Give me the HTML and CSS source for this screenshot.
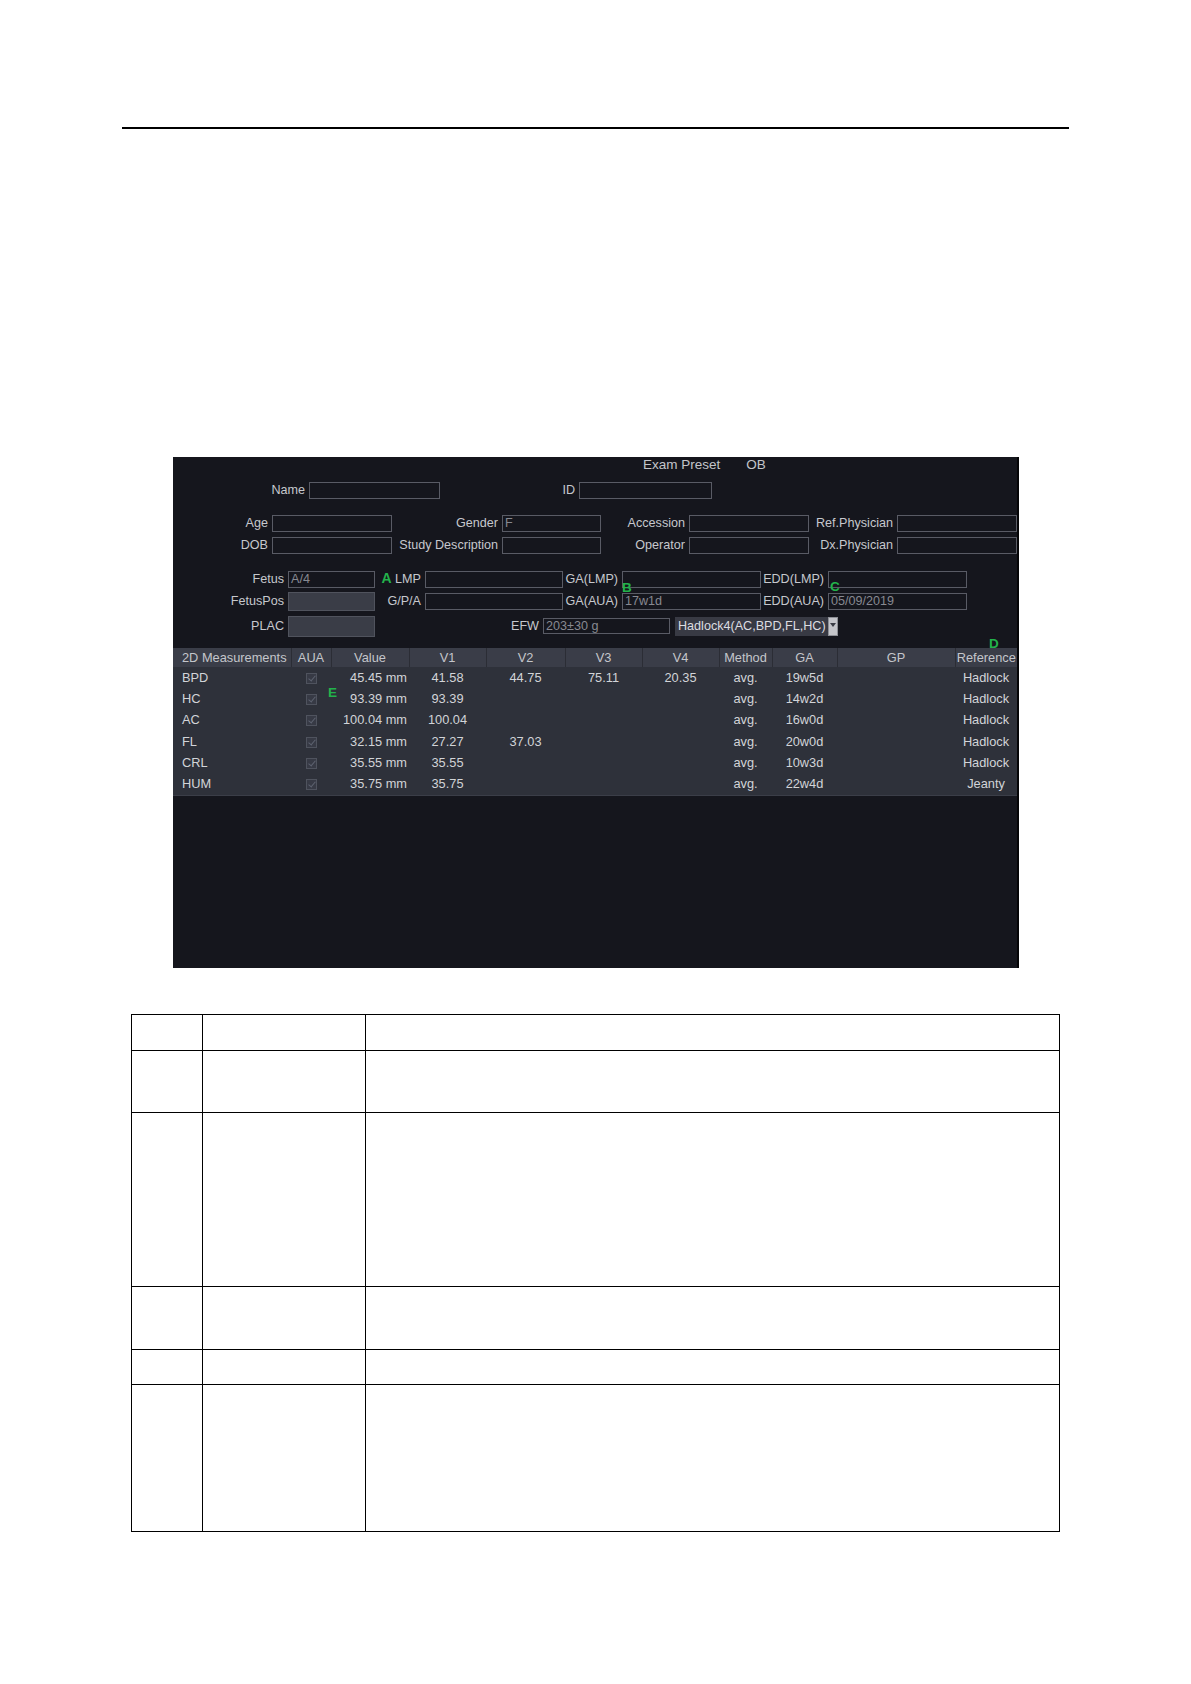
FILE: index.html
```html
<!DOCTYPE html>
<html>
<head>
<meta charset="utf-8">
<link rel="stylesheet" href="styles.css">
</head>
<body>
<div class="page">
  <div class="top-rule"></div>

  <div class="panel">
    <div class="exam-row"><span>Exam Preset</span><span class="exam-ob">OB</span></div>

    <div class="frow r-top">
      <div class="lbl">Name</div><div class="fld"></div>
      <div class="lbl">ID</div><div class="fld"></div>
    </div>

    <div class="frow r-a r-a1">
      <div class="lbl">Age</div><div class="fld"></div>
      <div class="lbl">Gender</div><div class="fld">F</div>
      <div class="lbl">Accession</div><div class="fld"></div>
      <div class="lbl">Ref.Physician</div><div class="fld"></div>
    </div>

    <div class="frow r-a r-a2">
      <div class="lbl">DOB</div><div class="fld"></div>
      <div class="lbl">Study Description</div><div class="fld"></div>
      <div class="lbl">Operator</div><div class="fld"></div>
      <div class="lbl">Dx.Physician</div><div class="fld"></div>
    </div>

    <div class="frow r-b r-b1">
      <div class="lbl">Fetus</div><div class="fld">A/4</div>
      <div class="lbl"><span class="mark-a">A</span> LMP</div><div class="fld"></div>
      <div class="lbl">GA(LMP)</div><div class="fld"></div>
      <div class="lbl">EDD(LMP)</div><div class="fld"></div>
    </div>

    <div class="frow r-b r-b2">
      <div class="lbl">FetusPos</div><div class="fld filled"></div>
      <div class="lbl">G/P/A</div><div class="fld"></div>
      <div class="lbl">GA(AUA)</div><div class="fld">17w1d</div>
      <div class="lbl">EDD(AUA)</div><div class="fld">05/09/2019</div>
    </div>

    <div class="frow r-c">
      <div class="lbl">PLAC</div><div class="fld filled tall"></div>
      <div class="lbl">EFW</div><div class="fld short">203±30 g</div>
      <div></div>
      <div class="dropdown">Hadlock4(AC,BPD,FL,HC)</div>
      <div class="dd-arrow"><svg width="10" height="19" viewBox="0 0 10 19"><rect x="0" y="0" width="10" height="19" fill="#c4c5ca"/><rect x="0.5" y="0.5" width="9" height="18" fill="none" stroke="#8d8f96"/><polygon points="2,6 8,6 5,10" fill="#3a3c45"/></svg></div>
    </div>

    <table class="meas">
      <colgroup>
        <col class="c-name"><col class="c-aua"><col class="c-val"><col class="c-v1"><col class="c-v2"><col class="c-v3"><col class="c-v4"><col class="c-meth"><col class="c-ga"><col class="c-gp"><col class="c-ref">
      </colgroup>
      <thead>
        <tr>
          <th class="left">2D Measurements</th><th>AUA</th><th>Value</th><th>V1</th><th>V2</th><th>V3</th><th>V4</th><th>Method</th><th>GA</th><th>GP</th><th>Reference</th>
        </tr>
      </thead>
      <tbody>
        <tr><td class="left">BPD</td><td><span class="cb"></span></td><td class="right">45.45 mm</td><td>41.58</td><td>44.75</td><td>75.11</td><td>20.35</td><td>avg.</td><td>19w5d</td><td></td><td>Hadlock</td></tr>
        <tr><td class="left">HC</td><td><span class="cb"></span></td><td class="right">93.39 mm</td><td>93.39</td><td></td><td></td><td></td><td>avg.</td><td>14w2d</td><td></td><td>Hadlock</td></tr>
        <tr><td class="left">AC</td><td><span class="cb"></span></td><td class="right">100.04 mm</td><td>100.04</td><td></td><td></td><td></td><td>avg.</td><td>16w0d</td><td></td><td>Hadlock</td></tr>
        <tr><td class="left">FL</td><td><span class="cb"></span></td><td class="right">32.15 mm</td><td>27.27</td><td>37.03</td><td></td><td></td><td>avg.</td><td>20w0d</td><td></td><td>Hadlock</td></tr>
        <tr><td class="left">CRL</td><td><span class="cb"></span></td><td class="right">35.55 mm</td><td>35.55</td><td></td><td></td><td></td><td>avg.</td><td>10w3d</td><td></td><td>Hadlock</td></tr>
        <tr><td class="left">HUM</td><td><span class="cb"></span></td><td class="right">35.75 mm</td><td>35.75</td><td></td><td></td><td></td><td>avg.</td><td>22w4d</td><td></td><td>Jeanty</td></tr>
      </tbody>
    </table>

    <span class="mark mark-b">B</span>
    <span class="mark mark-c">C</span>
    <span class="mark mark-d">D</span>
    <span class="mark mark-e">E</span>
  </div>

  <table class="doc">
    <colgroup><col class="d1"><col class="d2"><col class="d3"></colgroup>
    <tr class="h36"><td></td><td></td><td></td></tr>
    <tr class="h62"><td></td><td></td><td></td></tr>
    <tr class="h174"><td></td><td></td><td></td></tr>
    <tr class="h63"><td></td><td></td><td></td></tr>
    <tr class="h35"><td></td><td></td><td></td></tr>
    <tr class="h147"><td></td><td></td><td></td></tr>
  </table>
</div>
</body>
</html>
```
FILE: styles.css
```css
html, body {
  margin: 0;
  padding: 0;
  background: #ffffff;
}
.page {
  width: 1191px;
  height: 1684px;
  overflow: hidden;
  font-family: "Liberation Sans", Arial, sans-serif;
}
.top-rule {
  margin: 127px 0 0 122px;
  width: 947px;
  height: 2px;
  background: #000;
}
.panel {
  position: relative;
  margin: 328px 0 0 173px;
  width: 846px;
  height: 511px;
  box-sizing: border-box;
  background: #15161d;
  border-right: 2px solid #050507;
  overflow: hidden;
  color: #c6c8cd;
}
.exam-row {
  height: 14px;
  line-height: 14px;
  font-size: 13.5px;
  padding-left: 470px;
  padding-top: 1px;
  color: #c3c5ca;
}
.exam-ob {
  margin-left: 26px;
}
.frow {
  display: grid;
  align-items: center;
  font-size: 12.6px;
}
.r-top {
  grid-template-columns: 136px 131px 139px 133px;
  height: 17px;
  margin-top: 10px;
}
.r-a {
  grid-template-columns: 99px 120px 110px 99px 88px 120px 88px 120px;
  height: 17px;
}
.r-a1 { margin-top: 16px; }
.r-a2 { margin-top: 5px; }
.r-b {
  grid-template-columns: 115px 87px 50px 138px 59px 139px 67px 139px;
  height: 17px;
}
.r-b1 { margin-top: 16px; }
.r-b2 { margin-top: 5px; height: 18px; }
.r-c {
  grid-template-columns: 115px 87px 168px 127px 5px 153px 10px;
  height: 22px;
  margin-top: 5px;
}
.lbl {
  text-align: right;
  padding-right: 4px;
  white-space: nowrap;
  line-height: 17px;
  color: #c6c8cd;
}
.fld {
  height: 17px;
  box-sizing: border-box;
  border: 1px solid #595b65;
  line-height: 15px;
  padding-left: 2px;
  color: #878991;
  white-space: nowrap;
  overflow: hidden;
}
.fld.filled {
  height: 19px;
  background: #3a3d47;
  border-color: #50535d;
}
.fld.tall {
  height: 21px;
}
.fld.short {
  height: 16px;
  line-height: 14px;
}
.dropdown {
  height: 19px;
  box-sizing: border-box;
  background: #383a44;
  color: #dcdde1;
  line-height: 18px;
  padding-left: 3px;
  white-space: nowrap;
  overflow: hidden;
}
.dd-arrow {
  height: 19px;
  display: flex;
}
.mark-a {
  color: #23b24b;
  font-weight: bold;
  font-size: 14px;
}
.mark {
  position: absolute;
  color: #23b24b;
  font-weight: bold;
  font-size: 13.5px;
  line-height: 11px;
}
.mark-b { left: 449px; top: 125px; }
.mark-c { left: 657px; top: 124px; }
.mark-d { left: 816px; top: 181px; }
.mark-e { left: 155px; top: 230px; }

.meas {
  margin-top: 11px;
  width: 844px;
  border-collapse: collapse;
  table-layout: fixed;
  font-size: 12.8px;
}
.c-name { width: 118px; }
.c-aua { width: 40px; }
.c-val { width: 78px; }
.c-v1 { width: 77px; }
.c-v2 { width: 79px; }
.c-v3 { width: 77px; }
.c-v4 { width: 77px; }
.c-meth { width: 53px; }
.c-ga { width: 65px; }
.c-gp { width: 118px; }
.c-ref { width: 62px; }
.meas th {
  height: 19px;
  padding: 0;
  font-weight: normal;
  background: #3a3d48;
  color: #c4c6cb;
  text-align: center;
  white-space: nowrap;
  border-left: 1px solid #2b2d35;
  line-height: 18px;
}
.meas th:first-child {
  border-left: none;
}
.meas tbody td {
  height: 21.3px;
  padding: 0;
  background: #2e313a;
  color: #d2d4d8;
  text-align: center;
  white-space: nowrap;
  line-height: 20px;
}
.meas tbody tr:last-child td {
  border-bottom: 1px solid #3b3e48;
}
.meas .left {
  text-align: left;
  padding-left: 9px;
}
.meas td.right {
  text-align: right;
  padding-right: 2px;
}
.cb {
  display: inline-block;
  width: 11px;
  height: 11px;
  box-sizing: border-box;
  border: 1px solid #4f535e;
  background: #373a45;
  vertical-align: middle;
  position: relative;
}
.cb::after {
  content: "";
  position: absolute;
  left: 3px;
  top: 0px;
  width: 3px;
  height: 6px;
  border-right: 1px solid #5d6270;
  border-bottom: 1px solid #5d6270;
  transform: rotate(40deg);
}

.doc {
  margin: 46px 0 0 131px;
  width: 928px;
  border-collapse: collapse;
  table-layout: fixed;
}
.d1 { width: 71px; }
.d2 { width: 163px; }
.d3 { width: 694px; }
.doc td {
  border: 1.5px solid #000;
  padding: 0;
}
.h36 td { height: 35px; }
.h62 td { height: 61px; }
.h174 td { height: 173px; }
.h63 td { height: 62px; }
.h35 td { height: 34px; }
.h147 td { height: 146px; }
```
